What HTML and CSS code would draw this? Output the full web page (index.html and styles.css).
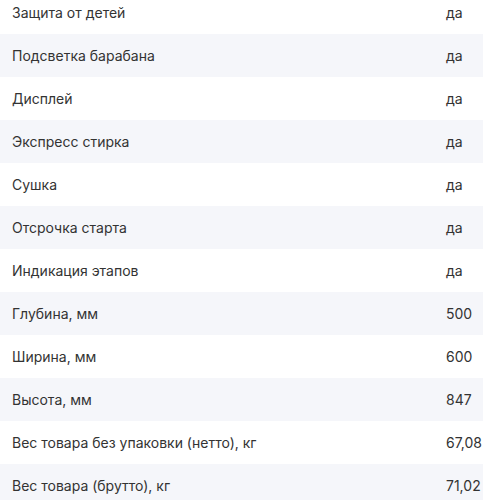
FILE: index.html
```html
<!DOCTYPE html>
<html lang="ru">
<head>
<meta charset="utf-8">
<link rel="stylesheet" href="styles.css">
</head>
<body>
<div class="specs">
  <div class="row"><span class="label">Защита от детей</span><span class="value">да</span></div>
  <div class="row alt"><span class="label">Подсветка барабана</span><span class="value">да</span></div>
  <div class="row"><span class="label">Дисплей</span><span class="value">да</span></div>
  <div class="row alt"><span class="label">Экспресс стирка</span><span class="value">да</span></div>
  <div class="row"><span class="label">Сушка</span><span class="value">да</span></div>
  <div class="row alt"><span class="label">Отсрочка старта</span><span class="value">да</span></div>
  <div class="row"><span class="label">Индикация этапов</span><span class="value">да</span></div>
  <div class="row alt"><span class="label">Глубина, мм</span><span class="value">500</span></div>
  <div class="row"><span class="label">Ширина, мм</span><span class="value">600</span></div>
  <div class="row alt"><span class="label">Высота, мм</span><span class="value">847</span></div>
  <div class="row"><span class="label">Вес товара без упаковки (нетто), кг</span><span class="value">67,08</span></div>
  <div class="row alt"><span class="label">Вес товара (брутто), кг</span><span class="value">71,02</span></div>
</div>
</body>
</html>
```
FILE: styles.css
```css
html, body {
  margin: 0;
  padding: 0;
  background: #ffffff;
  overflow: hidden;
}
body {
  font-family: Inter, "Noto Sans", sans-serif;
  font-size: 14px;
  color: #333333;
}
.specs {
  margin-top: -9px;
  display: flex;
  flex-direction: column;
}
.row {
  height: 43px;
  display: grid;
  grid-template-columns: 434px 1fr;
  align-items: center;
  padding-left: 12px;
  white-space: nowrap;
}
.alt {
  background: #f5f6fa;
}
```
